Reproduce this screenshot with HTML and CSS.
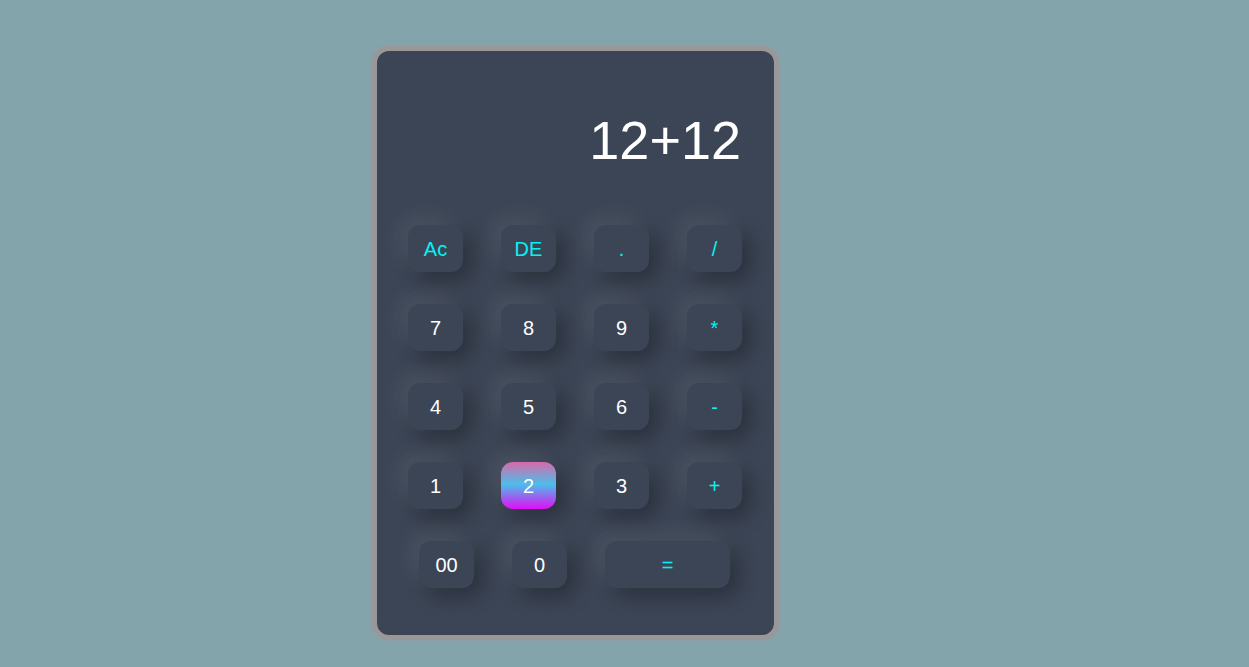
FILE: index.html
```html
<!DOCTYPE html>
<html>
<head>
<meta charset="utf-8">
<link rel="stylesheet" href="styles.css">
</head>
<body>
<div class="calc">
  <div class="display">12+12</div>
  <div class="keys">
    <button class="key op">Ac</button>
    <button class="key op">DE</button>
    <button class="key op">.</button>
    <button class="key op">/</button>
    <button class="key">7</button>
    <button class="key">8</button>
    <button class="key">9</button>
    <button class="key op">*</button>
    <button class="key">4</button>
    <button class="key">5</button>
    <button class="key">6</button>
    <button class="key op">-</button>
    <button class="key">1</button>
    <button class="key active">2</button>
    <button class="key">3</button>
    <button class="key op">+</button>
  </div>
  <div class="last-row">
    <button class="key">00</button>
    <button class="key">0</button>
    <button class="key op wide">=</button>
  </div>
</div>
</body>
</html>
```
FILE: styles.css
```css
html, body {
  margin: 0;
  padding: 0;
  background: #84a4ac;
  font-family: "Liberation Sans", Arial, sans-serif;
}
body {
  padding: 46px 0 0 372px;
  height: 667px;
  box-sizing: border-box;
}
.calc {
  width: 397px;
  height: 584px;
  box-sizing: content-box;
  background: #3c4555;
  border: 5px solid #999797;
  border-radius: 17px;
  box-shadow: 0 0 3px #999797;
  display: flex;
  flex-direction: column;
}
.display {
  color: #ffffff;
  font-size: 54px;
  line-height: 56px;
  text-align: right;
  padding: 61px 33px 0 0;
  height: 56px;
}
.keys {
  margin-top: 57px;
  padding-left: 31px;
  display: grid;
  grid-template-columns: repeat(4, 55px);
  column-gap: 38px;
  row-gap: 32px;
}
.last-row {
  margin-top: 32px;
  padding-left: 42px;
  display: flex;
  gap: 38px;
}
.key {
  width: 55px;
  height: 47px;
  border: none;
  border-radius: 12px;
  background: #3c4555;
  color: #ffffff;
  font-family: "Liberation Sans", Arial, sans-serif;
  font-size: 20px;
  padding: 1px 0 0 0;
  box-shadow: -8px -8px 20px rgba(255, 255, 255, 0.08), 8px 8px 20px rgba(0, 0, 0, 0.3);
}
.key.op {
  color: #00f4f4;
}
.key.wide {
  width: 125px;
}
.key.active {
  background: linear-gradient(#d66aa9 0%, #4cbdea 48%, #e10ef6 100%);
}
```
